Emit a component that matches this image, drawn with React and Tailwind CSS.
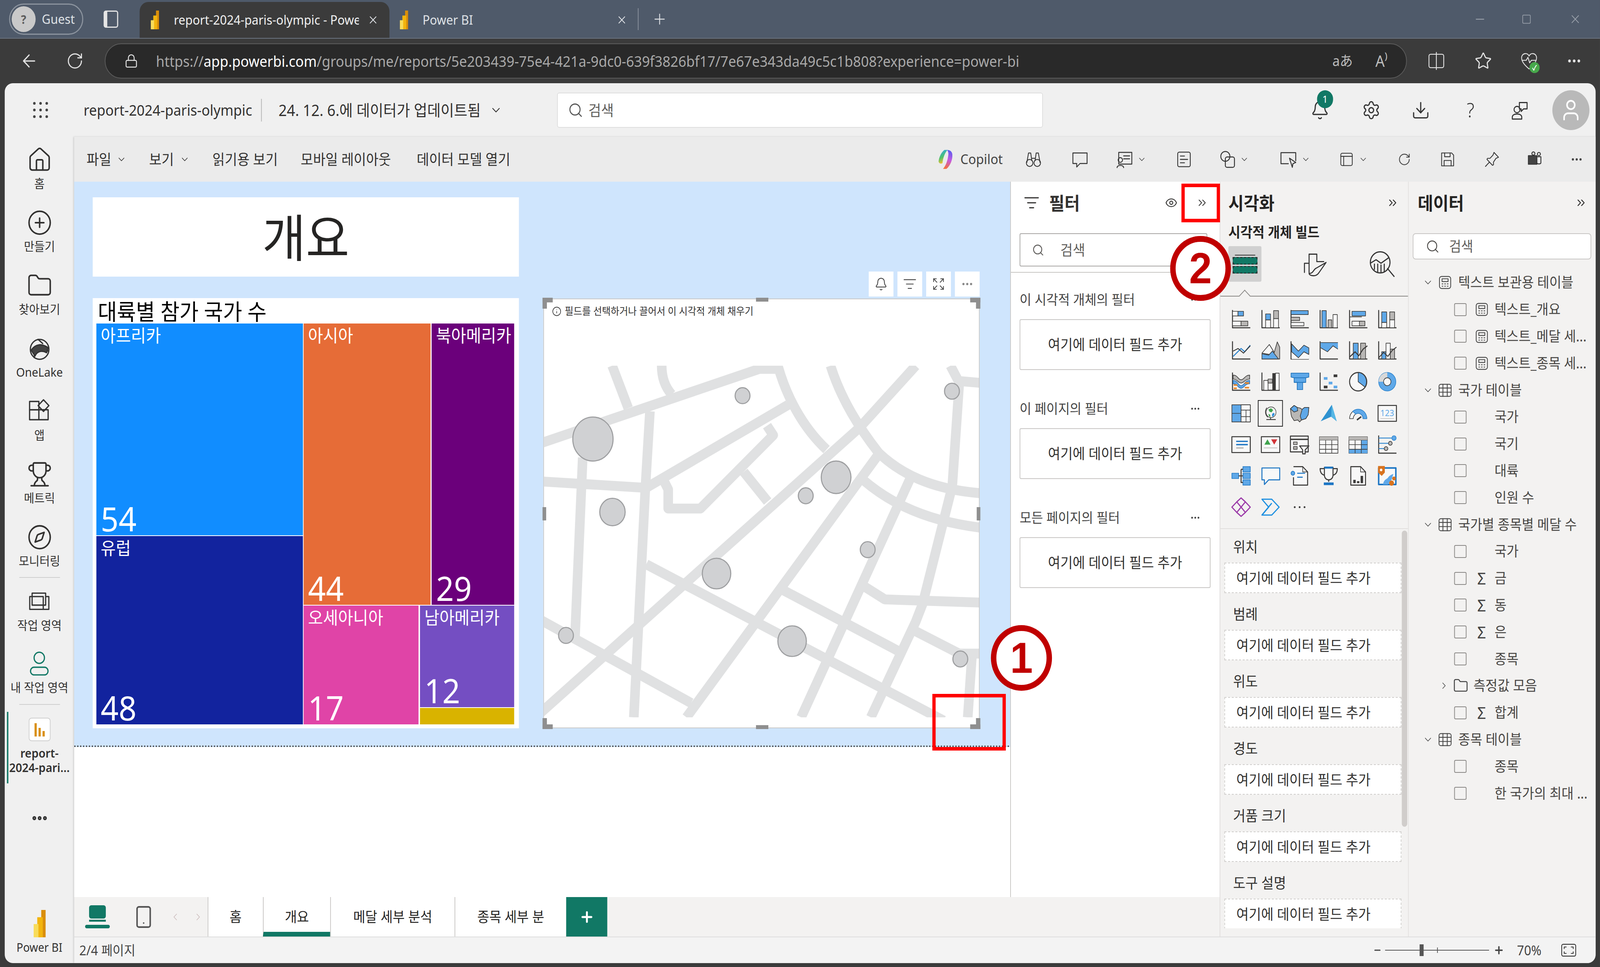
import {
  ArrowLeft, Bell, ChevronDown, ChevronRight, ChevronsRight, CirclePlus, Compass, Download, Ellipsis, Expand, Eye,
  Folder, House, Info, ListFilter, Lock, Minus, Plus, RotateCw, Search, Settings, Smartphone, Square, Star, Trophy, User, X,
} from "lucide-react";

const D = "#3b3a39";
const B = "#5fa8e8";
const G = "#b9b7b5";
const W = "#f8f8f8";

function PbiLogo({ className }) {
  return (
    <svg viewBox="0 0 32 64" className={className}>
      <rect x="20" width="11" height="64" fill="#d98e0b" />
      <rect x="10" y="17" width="14" height="47" fill="#f2b40e" />
      <rect x="1" y="33" width="12" height="31" fill="#f8dc5a" />
    </svg>
  );
}

function Ic({ children, className = "w-[64px] h-[64px]", vb = "0 0 32 32", stroke = "#333", sw = 1.4 }) {
  return (
    <svg viewBox={vb} fill="none" stroke={stroke} strokeWidth={sw} strokeLinecap="round" strokeLinejoin="round" className={className}>
      {children}
    </svg>
  );
}

const axis = <path d="M2 2v27h29" stroke={D} strokeWidth="1.6" fill="none" />;

// gallery of visual types, 6 per row
const GALLERY = [
  <>{axis}<rect x="2" y="4" width="9" height="7" fill={W} stroke={D} /><rect x="11" y="4" width="9" height="7" fill={B} stroke={D} /><rect x="2" y="19" width="14" height="7" fill={W} stroke={D} /><rect x="16" y="19" width="11" height="7" fill={G} stroke={D} /></>,
  <>{axis}<rect x="8" y="17" width="8" height="12" fill={W} stroke={D} /><rect x="8" y="8" width="8" height="9" fill={B} stroke={D} /><rect x="21" y="15" width="8" height="14" fill={W} stroke={D} /><rect x="21" y="3" width="8" height="12" fill={G} stroke={D} /></>,
  <>{axis}<rect x="2" y="3" width="28" height="6" fill={B} stroke={D} /><rect x="2" y="13" width="14" height="5" fill={G} stroke={D} /><rect x="2" y="21" width="21" height="5" fill={W} stroke={D} /></>,
  <>{axis}<rect x="5" y="3" width="7" height="26" fill={B} stroke={D} /><rect x="15" y="17" width="6" height="12" fill={G} stroke={D} /><rect x="23" y="9" width="7" height="20" fill={W} stroke={D} /></>,
  <>{axis}<rect x="6" y="4" width="22" height="7" fill={B} stroke={D} /><rect x="2" y="12" width="20" height="1" fill={D} /><rect x="6" y="19" width="16" height="7" fill={W} stroke={D} /><rect x="18" y="19" width="9" height="7" fill={G} stroke={D} /></>,
  <>{axis}<rect x="7" y="5" width="8" height="16" fill={B} stroke={D} /><rect x="7" y="21" width="8" height="8" fill={W} stroke={D} /><rect x="20" y="5" width="8" height="12" fill={G} stroke={D} /><rect x="20" y="17" width="8" height="12" fill={W} stroke={D} /></>,

  <>{axis}<path d="M3 25L16 13l6 5 9-10" stroke="#2f86cf" strokeWidth="1.6" /><path d="M3 17l8-4 9 7 11-11" stroke={D} strokeWidth="1.4" /></>,
  <><path d="M2 29L14 7l8 12 5-16 4 8v18z" fill={G} stroke={D} /><path d="M2 20L14 7l8 12-8 3z" fill={W} stroke={D} /><path d="M2 29v-8l11 2 6-6 10 12z" fill={B} stroke={D} /></>,
  <>{axis}<path d="M3 8l11 10 9-9 8 6v14H3z" fill={W} /><path d="M3 6l11 11 9-9 8 4v10l-8-4-9 9L3 18z" fill={B} stroke={D} /></>,
  <>{axis}<path d="M3 4h28v10l-8-5-9 9L3 12z" fill={B} /><path d="M3 4h28M3 12l11 6 9-9 8 5" stroke={D} fill="none" /></>,
  <>{axis}<rect x="8" y="5" width="8" height="24" fill={B} stroke={D} /><rect x="20" y="5" width="8" height="24" fill={G} stroke={D} /><path d="M2 26l9-8 6 6 7-10 7-5" stroke={D} strokeWidth="1.6" /></>,
  <>{axis}<rect x="7" y="18" width="7" height="11" fill={B} stroke={D} /><rect x="14" y="5" width="7" height="24" fill={W} stroke={D} /><rect x="21" y="14" width="7" height="15" fill={G} stroke={D} /><path d="M2 27l8-8 7 6 7-9 7-5" stroke={D} strokeWidth="1.4" /></>,

  <>{axis}<path d="M3 6c8 0 8 7 13 7s6-7 14-7v6c-8 0-9 6-14 6S10 12 3 12z" fill={G} stroke={D} /><path d="M3 14c8 0 8 8 13 8s6-8 14-8v5c-8 0-9 7-14 7S10 19 3 19z" fill={B} stroke="#2f6fb0" /><path d="M4 21h6M22 18h7M4 26h5M22 25h7" stroke="#e8872a" strokeWidth="2.4" /></>,
  <>{axis}<rect x="5" y="14" width="7" height="15" fill={W} stroke={D} /><rect x="12" y="12" width="7" height="6" fill={G} stroke={D} /><rect x="19" y="3" width="5" height="26" fill={D} /><rect x="24" y="3" width="6" height="26" fill={W} stroke={D} /></>,
  <><path d="M2 3h29v6l-5 1v7h-5v11H12V17H7v-7l-5-1z" fill={B} stroke="#1b6fb8" /><path d="M7 10h19M7 17h19" stroke="#1b6fb8" /></>,
  <>{axis}<rect x="8" y="9" width="6" height="4" fill={B} /><rect x="16" y="16" width="6" height="4" fill={B} /><rect x="24" y="5" width="6" height="4" fill={D} /><rect x="8" y="22" width="6" height="4" fill={D} /><rect x="24" y="22" width="6" height="4" fill={B} /></>,
  <><circle cx="16" cy="16" r="14" fill={W} stroke={D} strokeWidth="1.6" /><path d="M16 2a14 14 0 0 1 11 22L16 16z" fill={B} stroke={D} /></>,
  <><circle cx="16" cy="16" r="14" fill={B} stroke="#2f86cf" /><path d="M2 16A14 14 0 0 1 16 2v8a6 6 0 0 0-6 6z" fill="#d8d8d8" /><circle cx="16" cy="16" r="6" fill={W} stroke={D} /></>,

  <><rect x="1" y="3" width="15" height="26" fill={B} /><rect x="16" y="3" width="15" height="26" fill={W} stroke={D} /><path d="M1 16h15M16 11h15M24 11v18M16 21h15" stroke={D} /><rect x="1" y="3" width="30" height="26" stroke={D} /></>,
  <><circle cx="17" cy="14" r="9.5" fill="#f4f4f4" stroke={D} /><path d="M12 9l5-2 4 3-3 4-4-1z" fill="#3fa34d" /><path d="M19 17l3-2 2 2-3 5-2-1z" fill="#2e8fd8" /><path d="M12 17l3 1 1 4-3-1z" fill="#3fa34d" /><path d="M9 6a12 12 0 0 0 2 17" stroke={D} strokeWidth="1.4" /><path d="M8 27h18M16 23v4" stroke={D} strokeWidth="1.6" /></>,
  <><path d="M1 9l6-5 5 3 5 1 3 2 4-3 7 0-1 11-4 6-7 2-3 3-3-3-6 1-4-6-1-4-1-8z" fill={G} stroke={D} /><path d="M1 9l6-5 5 3 1 5-6 2zM20 10l4-3 7 0-1 11-4 6-7 2-2-6z" fill={B} stroke={D} /></>,
  <><path d="M3 28L21 3l8 25-9-7z" fill="#2f92d0" /><path d="M21 3l8 25-9-7z" fill="#55b7e5" /></>,
  <><path d="M2 24a14 14 0 0 1 28 0h-6a8 8 0 0 0-16 0z" fill={W} stroke={D} /><path d="M7 13a14 14 0 0 1 23 11h-6a8 8 0 0 0-12-7z" fill={B} stroke="#2f86cf" /><path d="M14 26l7-5" stroke={D} strokeWidth="2.2" /></>,
  <><rect x="1" y="4" width="30" height="24" fill={W} stroke={D} strokeWidth="1.6" /><path d="M5 24h22" stroke={G} /><text x="16" y="20" fontSize="13" fill={B} textAnchor="middle">123</text></>,

  <><rect x="1" y="4" width="30" height="24" fill={W} stroke={D} strokeWidth="1.6" /><path d="M8 11h19M8 16h19" stroke="#1d76c4" strokeWidth="2" /><path d="M8 21h12" stroke={G} strokeWidth="2" /></>,
  <><rect x="1" y="4" width="30" height="24" fill={W} stroke={D} strokeWidth="1.6" /><path d="M6 16l5-8 5 8z" fill="#3fa34d" /><path d="M17 8h10l-5 8z" fill="#d13438" /><path d="M5 21h22" stroke={G} /></>,
  <><rect x="1" y="3" width="29" height="24" fill={W} stroke={D} strokeWidth="1.6" /><path d="M1 8h29" stroke={D} strokeWidth="2" /><rect x="6" y="12" width="6" height="4" fill={G} stroke={D} /><rect x="6" y="19" width="6" height="4" fill={G} stroke={D} /><path d="M16 18h15l-6 6v6h-4v-6z" fill={W} stroke={D} strokeWidth="1.6" /></>,
  <><rect x="1" y="4" width="30" height="25" fill={W} stroke={D} /><path d="M1 9h30M1 16h30M1 23h30M11 9v20M21 9v20" stroke={D} /><rect x="1" y="4" width="30" height="5" fill={G} /></>,
  <><rect x="1" y="4" width="30" height="25" fill={W} stroke={D} /><rect x="21" y="9" width="10" height="20" fill={B} /><rect x="1" y="23" width="30" height="6" fill={B} /><path d="M1 9h30M1 16h30M1 23h30M11 9v20M21 9v20" stroke={D} /><rect x="1" y="4" width="30" height="5" fill={G} /></>,
  <>{axis}<path d="M2 6h22M2 14h16M2 22h10" stroke="#2f86cf" strokeWidth="1.4" /><circle cx="27" cy="6" r="3.5" fill={B} stroke="#2f86cf" /><circle cx="21" cy="14" r="3" fill={G} stroke={D} /><circle cx="14" cy="22" r="3" fill={G} stroke={D} /></>,

  <><rect x="1" y="12" width="11" height="8" fill={B} stroke="#1d76c4" /><rect x="19" y="2" width="12" height="8" fill={B} stroke="#1d76c4" /><rect x="19" y="12" width="12" height="8" fill={B} stroke="#1d76c4" /><rect x="19" y="22" width="12" height="8" fill={B} stroke="#1d76c4" /><path d="M12 16h7M16 6v20h3M16 6h3" stroke={D} strokeWidth="1.6" /></>,
  <path d="M2 4h29v18H13l-7 7v-7H2z" fill={W} stroke="#1d76c4" strokeWidth="1.6" />,
  <><path d="M6 2h15l8 8v20H6V18" fill={W} stroke={D} strokeWidth="1.6" /><path d="M21 2v8h8" stroke={D} /><circle cx="5" cy="12" r="3" fill={B} stroke="#1d76c4" /><path d="M12 12h13M12 18h9" stroke="#1d76c4" strokeWidth="1.6" /></>,
  <><path d="M9 3h14v12c0 4-3 7-7 7s-7-3-7-7z" fill={W} stroke={D} strokeWidth="1.6" /><path d="M9 5H2c0 6 3 9 7 10M23 5h7c0 6-3 9-7 10" stroke={D} strokeWidth="1.6" /><rect x="9" y="2" width="14" height="3" fill="#1d76c4" /><path d="M16 22v3" stroke={D} strokeWidth="1.6" /><rect x="8" y="26" width="16" height="4" fill="#1d76c4" /></>,
  <><path d="M4 2h16l8 8v20H4z" fill={W} stroke={D} strokeWidth="1.6" /><path d="M20 2v8h8" stroke={D} /><rect x="8" y="22" width="4" height="5" fill={D} /><rect x="14" y="24" width="4" height="3" fill={D} /><rect x="20" y="16" width="4" height="11" fill={D} /></>,
  <><path d="M2 4h28v25H2z" fill={W} stroke="#1d76c4" strokeWidth="2.4" /><path d="M9 29c2-8 5-7 8-10 3-4 6-5 9-6l-3 9-6 7z" fill={B} /><path d="M1 1h11v10l-5 5-6-5z" fill="#d8731f" /><circle cx="6" cy="7" r="2" fill="#fff" /><circle cx="27" cy="20" r="3" fill="#d8731f" /><circle cx="23" cy="27" r="4" fill="#d8731f" /></>,

  <path d="M1 16L9 8l7 8 7-8 8 8-8 8-7-8-7 8zM9 8l7-6 7 6M9 24l7 6 7-6" fill="none" stroke="#9b3aa8" strokeWidth="1.8" />,
  <><path d="M2 4h16l12 12-12 12H2l11-12z" fill="none" stroke="#1d8fe0" strokeWidth="1.8" /><path d="M2 28L18 10" stroke="#1d8fe0" strokeWidth="1.8" /></>,
  <><circle cx="8" cy="16" r="1.5" fill={D} /><circle cx="16" cy="16" r="1.5" fill={D} /><circle cx="24" cy="16" r="1.5" fill={D} /></>,
];

const NAV = [
  [<House key="i" size={70} strokeWidth={1.4} />, "홈"],
  [<CirclePlus key="i" size={70} strokeWidth={1.4} />, "만들기"],
  [<Folder key="i" size={70} strokeWidth={1.4} />, "찾아보기"],
  [
    <Ic key="i" className="w-[68px] h-[68px]" sw={1.6}>
      <circle cx="16" cy="17" r="12" />
      <path d="M9 27c0-8 6-12 18-8M14 5l6 5" />
      <path d="M5 18c6-8 14-8 22-3l-2 6c-6-3-12-2-15 4z" fill="#444" />
    </Ic>,
    "OneLake",
  ],
  [
    <Ic key="i" className="w-[68px] h-[68px]" sw={1.6}>
      <rect x="3" y="14" width="12" height="12" /><rect x="15" y="14" width="12" height="12" /><rect x="3" y="4" width="12" height="10" /><path d="M21 2l7 7-7 7-7-7z" />
    </Ic>,
    "앱",
  ],
  [<Trophy key="i" size={70} strokeWidth={1.4} />, "메트릭"],
  [<Compass key="i" size={70} strokeWidth={1.4} />, "모니터링"],
];

const FIELD_WELLS = ["위치", "범례", "위도", "경도", "거품 크기", "도구 설명"];

const DATA_ROWS = [
  { kind: "table", icon: "calc", label: "텍스트 보관용 테이블" },
  { icon: "calc", label: "텍스트_개요" },
  { icon: "calc", label: "텍스트_메달 세..." },
  { icon: "calc", label: "텍스트_종목 세..." },
  { kind: "table", icon: "grid", label: "국가 테이블" },
  { label: "국가" },
  { label: "국기" },
  { label: "대륙" },
  { label: "인원 수" },
  { kind: "table", icon: "grid", label: "국가별 종목별 메달 수" },
  { label: "국가" },
  { icon: "sum", label: "금" },
  { icon: "sum", label: "동" },
  { icon: "sum", label: "은" },
  { label: "종목" },
  { kind: "folder", label: "측정값 모음" },
  { icon: "sum", label: "합계" },
  { kind: "table", icon: "grid", label: "종목 테이블" },
  { label: "종목" },
  { label: "한 국가의 최대 ..." },
];

function RowIcon({ icon }) {
  if (icon === "sum") return <span className="text-[42px] leading-none text-[#444]">Σ</span>;
  if (icon === "grid") {
    return (
      <Ic className="w-[38px] h-[38px]" stroke="#444" sw={1.8}>
        <rect x="2" y="3" width="28" height="26" rx="4" />
        <path d="M2 11h28M2 20h28M11 3v26M21 3v26" />
      </Ic>
    );
  }
  if (icon === "calc") {
    return (
      <Ic className="w-[38px] h-[38px]" stroke="#444" sw={1.8}>
        <rect x="3" y="3" width="26" height="26" rx="5" />
        <rect x="9" y="8" width="14" height="6" />
        <path d="M9 19h2M15 19h2M21 19h2M9 24h2M15 24h2M21 24h2" />
      </Ic>
    );
  }
  return null;
}

function DataRow({ row }) {
  if (row.kind === "table") {
    return (
      <div className="h-[68.8px] flex items-center pl-[38px]">
        <ChevronDown size={30} strokeWidth={1.4} color="#444" />
        <div className="w-[64px] flex justify-center"><RowIcon icon={row.icon} /></div>
        <span className="ml-[4px] whitespace-nowrap">{row.label}</span>
      </div>
    );
  }
  if (row.kind === "folder") {
    return (
      <div className="h-[68.8px] flex items-center pl-[83px]">
        <ChevronRight size={28} strokeWidth={1.4} color="#444" />
        <Folder size={42} strokeWidth={1.5} color="#444" className="ml-[11px]" />
        <span className="ml-[14px] whitespace-nowrap">{row.label}</span>
      </div>
    );
  }
  return (
    <div className="h-[68.8px] flex items-center pl-[125px]">
      <div className="w-[34px] h-[33px] rounded-[4px] border-2 border-[#8a8886] bg-[#f3f2f1]" />
      <div className="w-[77px] flex justify-center pl-[6px]"><RowIcon icon={row.icon} /></div>
      <span className="whitespace-nowrap">{row.label}</span>
    </div>
  );
}

function Tile({ label, value, bg, className }) {
  return (
    <div className={`${bg} ${className} flex flex-col justify-between text-white pl-[12px]`}>
      <span className="text-[45px] leading-[62px] whitespace-nowrap">{label}</span>
      <span className="text-[86px] leading-none">{value}</span>
    </div>
  );
}

function MapSketch() {
  const roads = [
    "M30 555L735 322H800",
    "M260 312L312 445",
    "M420 312C420 350 432 380 452 402",
    "M382 455L367 700L345 1125L330 1415",
    "M165 600L140 1165",
    "M30 675L370 695L828 435",
    "M760 500L780 530L545 760H441V700L428 675",
    "M685 645L762 738",
    "M1240 312L1060 505L30 1400",
    "M795 312C820 400 870 500 952 575",
    "M965 312C1000 420 1060 510 1120 585C1190 650 1290 700 1450 712",
    "M1120 590L500 1415",
    "M1070 670C1130 720 1240 795 1450 820",
    "M1225 660L870 1415",
    "M1380 375L1358 690L1262 1060L1240 1115L1095 1415",
    "M1352 312L1378 360L1450 366",
    "M370 935L1330 1425",
    "M810 1015L1180 1205",
    "M1075 1005L1140 1045L1450 1055",
    "M1240 1145L1380 1215H1450",
    "M1422 1215L1408 1415",
    "M30 1110L515 1370",
  ];
  const spots = [
    [198, 542, 65, 69], [681, 406, 24, 25], [1357, 392, 24, 25], [983, 662, 48, 51], [885, 720, 24, 25], [261, 771, 41, 43],
    [1085, 889, 24, 25], [597, 964, 46, 48], [841, 1176, 46, 48], [111, 1158, 24, 25], [1384, 1232, 24, 25],
  ];
  return (
    <svg viewBox="40 312 1404 1103" preserveAspectRatio="none" className="w-full h-[900px]">
      {roads.map((d) => (
        <path key={d} d={d} fill="none" stroke="#e0e1e2" strokeWidth="31" strokeLinejoin="round" />
      ))}
      {spots.map(([cx, cy, rx, ry]) => (
        <ellipse key={cx} cx={cx} cy={cy} rx={rx} ry={ry} fill="#d0d1d3" stroke="#9e9fa1" strokeWidth="3.5" />
      ))}
    </svg>
  );
}

function Corner({ className }) {
  return <div className={`absolute w-[28px] h-[28px] border-[#8f8f8f] ${className}`} />;
}

export default function App() {
  return (
    // The browser window measures 4096px wide, not the 4400px asked for (window.innerWidth),
    // so the 4400px page is squeezed by 4096/4400 to keep the right-hand panes in frame.
    <div className="w-[4096px] h-[2475px] overflow-hidden">
      <div className="relative origin-top-left scale-x-[0.9309] w-[4400px] h-[2475px] overflow-hidden flex flex-col bg-[#3b3b3b] text-[#252423] font-['Noto_Sans','Noto_Sans_CJK_KR',sans-serif]">
        {/* browser tabs */}
        <div className="h-[97px] shrink-0 bg-[#4f5a6a] flex items-end text-[33px] text-[#dfe2e6]">
          <div className="self-start mt-[9px] ml-[25px] w-[204px] h-[80px] rounded-full border-[3px] border-[#8b939e] flex items-center pl-[4px]">
            <div className="w-[66px] h-[66px] rounded-full bg-[#c9c9c9] flex items-center justify-center text-[#5b5b5b] text-[30px] font-bold">?</div>
            <span className="ml-[17px]">Guest</span>
          </div>
          <div className="self-center ml-[56px] w-[40px] h-[44px] rounded-[6px] border-[3px] border-[#e6e6e6] border-l-[10px]" />
          <div className="ml-[59px] w-[687px] h-[92px] rounded-t-[24px] bg-[#3b3b3b] flex items-center">
            <PbiLogo className="w-[28px] h-[48px] ml-[28px] shrink-0" />
            <span className="ml-[38px] w-[509px] overflow-hidden whitespace-nowrap text-[#f0f0f0]">report-2024-paris-olympic - Powe</span>
            <X size={32} strokeWidth={1.6} className="ml-[23px] shrink-0" />
          </div>
          <div className="w-[683px] h-[92px] flex items-center">
            <PbiLogo className="w-[28px] h-[48px] ml-[26px] shrink-0" />
            <span className="ml-[37px]">Power BI</span>
            <X size={32} strokeWidth={1.6} className="ml-[393px]" />
          </div>
          <div className="self-center w-[2px] h-[56px] bg-[#8b939e]" />
          <Plus size={44} strokeWidth={1.3} className="self-center ml-[36px]" />
          <div className="self-center ml-auto flex items-center text-[#9aa1ab]">
            <Minus size={36} strokeWidth={1.5} className="mr-[96px]" />
            <Square size={28} strokeWidth={1.5} className="mr-[102px]" />
            <X size={36} strokeWidth={1.3} className="mr-[50px]" />
          </div>
        </div>

        {/* address bar */}
        <div className="h-[116px] shrink-0 flex items-center text-[#e3e3e3] border-t-2 border-[#6a7380]">
          <ArrowLeft size={52} strokeWidth={1.5} className="ml-[54px]" />
          <RotateCw size={48} strokeWidth={1.5} className="ml-[76px]" />
          <div className="ml-[58px] w-[3581px] h-[90px] rounded-full bg-[#292929] border-2 border-[#5c5c5c] flex items-center text-[38px] text-[#a8a8a8]">
            <Lock size={38} strokeWidth={1.6} color="#e3e3e3" className="ml-[52px]" />
            <span className="ml-[49px] whitespace-nowrap">
              https://<span className="text-white">app.powerbi.com</span>/groups/me/reports/5e203439-75e4-421a-9dc0-639f3826bf17/7e67e343da49c5c1b808?experience=power-bi
            </span>
            <span className="ml-auto text-[36px] text-[#bdbdbd]">aあ</span>
            <span className="ml-[62px] mr-[50px] text-[40px] text-[#bdbdbd]">A⁾</span>
          </div>
          <Ic className="w-[50px] h-[50px] ml-[56px]" stroke="#e3e3e3" sw={1.5}><rect x="3" y="5" width="26" height="22" rx="3" /><path d="M16 2v28" /></Ic>
          <Star size={48} strokeWidth={1.5} className="ml-[80px]" />
          <div className="relative ml-[77px] w-[50px] h-[50px]">
            <Ic className="w-[50px] h-[50px]" stroke="#e3e3e3" sw={1.5}><path d="M16 29C4 20 2 14 3 9c2-6 10-7 13-1 3-6 11-5 13 1 1 5-1 11-13 20zM4 15h7l3-5 3 9 3-4h8" /></Ic>
            <div className="absolute right-[-4px] bottom-[-6px] w-[28px] h-[28px] rounded-full bg-[#47a84b] flex items-center justify-center text-white text-[18px] font-bold">✓</div>
          </div>
          <Ellipsis size={44} strokeWidth={2} className="ml-[77px]" />
        </div>

        {/* app */}
        <div className="flex-1 min-h-0 ml-[13px] mr-[12px] mb-[10px] rounded-[22px] overflow-hidden bg-[#f0f0f0] flex flex-col">
          <div className="h-[137px] shrink-0 flex items-center text-[38px] text-[#323130]">
            <div className="w-[1519px] shrink-0 flex items-center">
              <div className="ml-[78px] grid grid-cols-3 gap-[10px] shrink-0">
                {[...Array(9)].map((_, i) => (
                  <div key={i} className="w-[7px] h-[7px] rounded-full bg-[#444]" />
                ))}
              </div>
              <span className="ml-[98px] w-[488px] whitespace-nowrap">report-2024-paris-olympic</span>
              <div className="w-[2px] h-[58px] bg-[#b5b5b5]" />
              <span className="ml-[46px] whitespace-nowrap text-[40px]">24. 12. 6.에 데이터가 업데이트됨</span>
              <ChevronDown size={36} strokeWidth={1.5} className="ml-[24px]" />
            </div>
            <div className="w-[1336px] h-[90px] rounded-[6px] bg-white border-2 border-[#dedede] flex items-center">
              <Search size={42} strokeWidth={1.6} color="#555" className="ml-[28px]" />
              <span className="ml-[14px] text-[#605e5c]">검색</span>
            </div>
            <div className="ml-auto flex items-center mr-[17px]">
              <div className="relative w-[52px] flex justify-center">
                <Bell size={52} strokeWidth={1.5} color="#333" />
                <div className="absolute left-[18px] top-[-25px] w-[44px] h-[46px] rounded-full bg-[#117865] text-white text-[26px] flex items-center justify-center">1</div>
              </div>
              <Settings size={52} strokeWidth={1.5} color="#333" className="ml-[89px]" />
              <Download size={52} strokeWidth={1.5} color="#333" className="ml-[84px]" />
              <span className="ml-[85px] w-[52px] text-center text-[50px] font-light text-[#333]">?</span>
              <Ic className="w-[52px] h-[52px] ml-[84px]" stroke="#333" sw={1.7}>
                <circle cx="11" cy="15" r="5" /><path d="M3 30v-3c0-3 3-5 8-5s8 2 8 5v3z" /><path d="M15 4h13v10h-6l-4 4v-4h-3z" />
              </Ic>
              <div className="ml-[63px] w-[102px] h-[102px] rounded-full bg-[#b9b9b9] flex items-center justify-center">
                <User size={64} strokeWidth={1.6} color="#fff" />
              </div>
            </div>
          </div>

          <div className="flex-1 flex min-h-0">
            {/* left nav */}
            <nav className="w-[191px] shrink-0 flex flex-col items-center relative text-[31px] text-[#323130]">
              {NAV.map(([icon, label]) => (
                <div key={label} className="h-[161px] shrink-0 flex flex-col items-center justify-center gap-[4px]">
                  <div className="h-[72px] flex items-center">{icon}</div>
                  <span className="leading-[40px] whitespace-nowrap">{label}</span>
                </div>
              ))}
              <div className="w-[112px] h-[2px] mb-[3px] bg-[#cfcfcf]" />
              <div className="h-[159px] shrink-0 flex flex-col items-center pt-[22px] gap-[4px]">
                <div className="h-[72px] flex items-center">
                  <Ic className="w-[70px] h-[70px]" sw={1.5}><path d="M7 6h17v14H7z" /><path d="M4 10h17v15H4zM25 10h3v15H10" /></Ic>
                </div>
                <span className="leading-[40px] whitespace-nowrap">작업 영역</span>
              </div>
              <div className="h-[161px] shrink-0 flex flex-col items-center pt-[22px] gap-[4px]">
                <div className="h-[72px] flex items-center">
                  <Ic className="w-[70px] h-[70px]" stroke="#117865" sw={1.5}><circle cx="16" cy="9" r="6.5" /><rect x="5" y="20" width="22" height="9" rx="4.5" /></Ic>
                </div>
                <span className="leading-[40px] whitespace-nowrap">내 작업 영역</span>
              </div>
              <div className="w-[112px] h-[2px] bg-[#cfcfcf]" />
              <div className="mt-[33px] w-[60px] h-[60px] rounded-[8px] bg-white border-2 border-[#cfcfcf] flex items-end justify-center gap-[5px] pb-[10px]">
                <div className="w-[6px] h-[34px] bg-[#d98e0b]" />
                <div className="w-[6px] h-[22px] bg-[#d98e0b]" />
                <div className="w-[6px] h-[14px] bg-[#d98e0b]" />
              </div>
              <div className="mt-[12px] text-center font-semibold leading-[37px] text-[31px]">report-<br />2024-pari...</div>
              <Ellipsis size={50} strokeWidth={3} color="#333" className="mt-[86px]" />
              <div className="mt-auto flex flex-col items-center pb-[20px]">
                <PbiLogo className="w-[44px] h-[70px]" />
                <span className="mt-[6px] text-[30px] leading-[40px]">Power BI</span>
              </div>
              <div className="absolute left-[6px] top-[1472px] w-[4px] h-[183px] bg-[#117865]" />
            </nav>

            <div className="flex-1 flex flex-col min-w-0 shadow-[-2px_0_4px_rgba(0,0,0,0.15)]">
              {/* ribbon */}
              <div className="h-[115px] shrink-0 bg-[#ebebeb] flex items-center text-[37px] text-[#323130]">
                <span className="ml-[34px]">파일</span>
                <ChevronDown size={28} strokeWidth={1.5} className="ml-[14px]" />
                <span className="ml-[62px]">보기</span>
                <ChevronDown size={28} strokeWidth={1.5} className="ml-[16px]" />
                <span className="ml-[62px]">읽기용 보기</span>
                <span className="ml-[63px]">모바일 레이아웃</span>
                <span className="ml-[71px]">데이터 모델 열기</span>
                <div className="ml-auto flex items-center mr-[34px] text-[#444]">
                  <svg viewBox="0 0 32 40" className="w-[46px] h-[54px] mr-[18px]">
                    <defs>
                      <linearGradient id="cpa" x1="0" y1="0" x2="0.3" y2="1">
                        <stop offset="0" stopColor="#2aa5f0" /><stop offset="0.6" stopColor="#4fc26a" /><stop offset="1" stopColor="#f2c230" />
                      </linearGradient>
                      <linearGradient id="cpb" x1="0.6" y1="0" x2="0.4" y2="1">
                        <stop offset="0" stopColor="#5a5cf0" /><stop offset="0.5" stopColor="#c45ae0" /><stop offset="1" stopColor="#f5703a" />
                      </linearGradient>
                    </defs>
                    <path d="M14 2h6c-5 6-9 14-10 25-3 2-7 1-8-3C3 15 8 6 14 2z" fill="url(#cpa)" />
                    <path d="M19 2c5 0 10 2 11 8 1 10-4 22-12 28h-7c6-6 10-17 11-28 0-4-1-6-3-8z" fill="url(#cpb)" />
                  </svg>
                  <span className="w-[113px] text-[35px]">Copilot</span>
                  <Ic className="w-[48px] h-[54px] ml-[64px]" sw={1.5}><circle cx="9" cy="22" r="6" /><circle cx="23" cy="22" r="6" /><path d="M4 21L7 5h4l2 13M28 21L25 5h-4l-2 13M13 14h6" /></Ic>
                  <Ic className="w-[48px] h-[50px] ml-[80px]" sw={1.6}><path d="M3 5h26v18H16l-6 6v-6H3z" /></Ic>
                  <Ic className="w-[48px] h-[50px] ml-[75px]" sw={1.6}><rect x="5" y="4" width="24" height="20" /><path d="M14 10h11M14 15h11" /><circle cx="8" cy="17" r="4" /><path d="M2 30c0-5 12-5 12 0" /></Ic>
                  <ChevronDown size={26} strokeWidth={1.5} className="ml-[10px]" />
                  <Ic className="w-[46px] h-[50px] ml-[80px]" sw={1.6}><rect x="4" y="3" width="24" height="26" rx="3" /><path d="M9 10h8M9 16h14M9 22h8" /></Ic>
                  <Ic className="w-[50px] h-[54px] ml-[72px]" sw={1.6}><circle cx="12" cy="11" r="8" /><rect x="12" y="12" width="16" height="17" rx="3" /></Ic>
                  <ChevronDown size={26} strokeWidth={1.5} className="ml-[8px]" />
                  <Ic className="w-[50px] h-[54px] ml-[83px]" sw={1.6}><path d="M29 18V5H3v18h13" /><path d="M18 14l11 7-5 2-1 6z" /></Ic>
                  <ChevronDown size={26} strokeWidth={1.5} className="ml-[10px]" />
                  <Ic className="w-[42px] h-[46px] ml-[78px]" sw={1.6}><rect x="4" y="4" width="24" height="24" rx="3" /><path d="M4 10h24M10 10v18" /></Ic>
                  <ChevronDown size={26} strokeWidth={1.5} className="ml-[12px]" />
                  <RotateCw size={36} strokeWidth={1.5} className="ml-[82px]" />
                  <Ic className="w-[44px] h-[46px] ml-[79px]" sw={1.6}><path d="M4 4h20l4 4v20H4z" /><path d="M10 4v7h11V4M9 28V18h14v10" /></Ic>
                  <Ic className="w-[44px] h-[46px] ml-[78px]" sw={1.6}><path d="M20 3l9 9-5 2-5 7v5l-2 1-11-11 1-2h5l6-6z" /><path d="M11 21l-8 8" /></Ic>
                  <Ic className="w-[44px] h-[46px] ml-[74px]" stroke="#333" sw={1.8}><rect x="3" y="9" width="17" height="16" fill="#444" /><path d="M20 11h8v11c0 3-6 3-8 1" /><circle cx="24" cy="6" r="3" /><circle cx="13" cy="5" r="3" /></Ic>
                  <Ellipsis size={36} strokeWidth={2} className="ml-[75px]" />
                </div>
              </div>

              <div className="flex-1 flex min-h-0">
                <div className="w-[3150px] shrink-0 flex flex-col min-h-0">
                  <div className="flex-1 flex min-h-0">
                    {/* report canvas */}
                    <div className="w-[2574px] flex flex-col bg-white relative">
                      <div className="h-[1447px] shrink-0 bg-[#cfe5fd] flex pl-[51px] pt-[40px] gap-[67px] border-b-4 border-dotted border-[#444]">
                        <div className="w-[1172px]">
                          <div className="h-[203px] bg-white flex items-center justify-center text-[130px] text-[#252423]">개요</div>
                          <div className="mt-[55px] h-[1101px] bg-white px-[10px]">
                            <div className="h-[65px] pl-[4px] text-[57px] leading-[68px] text-black whitespace-nowrap">대륙별 참가 국가 수</div>
                            <div className="flex gap-[2px]">
                              <div className="w-[568px] flex flex-col gap-[2px]">
                                <Tile label="아프리카" value="54" bg="bg-[#118dff]" className="h-[542px]" />
                                <Tile label="유럽" value="48" bg="bg-[#12239e]" className="h-[482px]" />
                              </div>
                              <div className="w-[579px] flex flex-col gap-[2px]">
                                <div className="h-[720px] flex gap-[3px]">
                                  <Tile label="아시아" value="44" bg="bg-[#e66c37]" className="w-[349px]" />
                                  <Tile label="북아메리카" value="29" bg="bg-[#6b007b]" className="w-[227px]" />
                                </div>
                                <div className="h-[304px] flex gap-[4px]">
                                  <Tile label="오세아니아" value="17" bg="bg-[#e044a7]" className="w-[316px]" />
                                  <div className="w-[259px] flex flex-col gap-[2px]">
                                    <Tile label="남아메리카" value="12" bg="bg-[#744ec2]" className="h-[260px]" />
                                    <div className="h-[42px] bg-[#d9b300]" />
                                  </div>
                                </div>
                              </div>
                            </div>
                          </div>
                        </div>
                        <div className="w-[1200px] pt-[190px]">
                          <div className="h-[64px] mb-[5px] flex justify-end gap-[11px] text-[#444]">
                            <div className="w-[68px] h-[64px] bg-white flex items-center justify-center"><Bell size={36} strokeWidth={1.5} /></div>
                            <div className="w-[68px] h-[64px] bg-white flex items-center justify-center"><ListFilter size={38} strokeWidth={1.4} /></div>
                            <div className="w-[68px] h-[64px] bg-white flex items-center justify-center"><Expand size={36} strokeWidth={1.4} /></div>
                            <div className="w-[68px] h-[64px] bg-white flex items-center justify-center"><Ellipsis size={36} strokeWidth={2} color="#888" /></div>
                          </div>
                          <div className="relative h-[1100px] bg-white border-2 border-[#c8c8c8]">
                            <div className="h-[170px] pl-[22px] pt-[12px] flex items-start text-[26px] leading-[36px] text-[#333]">
                              <Info size={26} strokeWidth={1.5} className="mt-[6px]" />
                              <span className="ml-[9px] whitespace-nowrap">필드를 선택하거나 끌어서 이 시각적 개체 채우기</span>
                            </div>
                            <MapSketch />
                            <Corner className="left-[-4px] top-[-4px] border-l-[12px] border-t-[12px]" />
                            <Corner className="right-[-4px] top-[-4px] border-r-[12px] border-t-[12px]" />
                            <Corner className="left-[-4px] bottom-[-4px] border-l-[12px] border-b-[12px]" />
                            <Corner className="right-[-4px] bottom-[-4px] border-r-[12px] border-b-[12px]" />
                            <div className="absolute left-[583px] top-[-4px] w-[34px] h-[10px] bg-[#8f8f8f]" />
                            <div className="absolute left-[583px] bottom-[-4px] w-[34px] h-[10px] bg-[#8f8f8f]" />
                            <div className="absolute left-[-4px] top-[532px] w-[10px] h-[34px] bg-[#8f8f8f]" />
                            <div className="absolute right-[-4px] top-[532px] w-[10px] h-[34px] bg-[#8f8f8f]" />
                          </div>
                        </div>
                      </div>
                    </div>

                    {/* filter pane */}
                    <div className="flex-1 bg-white border-l-2 border-[#c8c6c4] text-[37px] text-[#323130]">
                      <div className="h-[108px] flex items-center pl-[35px]">
                        <ListFilter size={44} strokeWidth={1.6} />
                        <span className="ml-[26px] text-[46px] font-semibold">필터</span>
                        <Eye size={34} strokeWidth={1.7} className="ml-[234px]" />
                        <ChevronsRight size={34} strokeWidth={1.5} className="ml-[51px]" />
                      </div>
                      <div className="ml-[24px] mt-[24px] w-[516px] h-[85px] rounded-[4px] border-2 border-[#a8a6a4] flex items-center text-[#605e5c]">
                        <Search size={34} strokeWidth={1.7} className="ml-[32px]" />
                        <span className="ml-[44px]">검색</span>
                      </div>
                      <div className="mt-[14px] h-[2px] bg-[#c8c6c4]" />
                      {["이 시각적 개체의 필터", "이 페이지의 필터", "모든 페이지의 필터"].map((title) => (
                        <div key={title} className="h-[279px] pl-[24px] pt-[44px]">
                          <div className="flex items-center justify-between w-[498px] h-[50px] text-[35px] text-[#444]">
                            <span>{title}</span>
                            <Ellipsis size={30} strokeWidth={2} />
                          </div>
                          <div className="mt-[25px] w-[525px] h-[130px] rounded-[4px] border-2 border-[#c8c6c4] flex items-center justify-center">
                            여기에 데이터 필드 추가
                          </div>
                        </div>
                      ))}
                    </div>
                  </div>

                  {/* page tabs */}
                  <div className="h-[101px] shrink-0 bg-[#f3f2f1] flex text-[36px] text-[#252423]">
                    <div className="w-[367px] flex items-center">
                      <div className="ml-[34px] w-[60px] flex flex-col items-center">
                        <div className="w-[46px] h-[34px] rounded-[6px] bg-[#117865]" />
                        <div className="mt-[3px] w-[46px] h-[5px] bg-[#117865]" />
                        <div className="mt-[8px] w-[68px] h-[9px] rounded-full bg-[#117865]" />
                      </div>
                      <Smartphone size={62} strokeWidth={1.6} color="#555" className="ml-[66px]" />
                      <ChevronRight size={30} strokeWidth={1.2} color="#c8b8b8" className="ml-[41px] rotate-180" />
                      <ChevronRight size={30} strokeWidth={1.2} color="#c8b8b8" className="ml-[33px]" />
                    </div>
                    <div className="w-[152px] bg-white border-l-2 border-[#c8c6c4] flex items-center justify-center">홈</div>
                    <div className="w-[185px] bg-white border-l-2 border-[#c8c6c4] flex items-center justify-center border-b-[12px] border-b-[#117865] pt-[12px]">개요</div>
                    <div className="w-[342px] bg-white border-l-2 border-[#c8c6c4] flex items-center justify-center">메달 세부 분석</div>
                    <div className="w-[307px] bg-white border-l-2 border-[#c8c6c4] flex items-center justify-center">종목 세부 분</div>
                    <div className="w-[113px] bg-[#117865] flex items-center justify-center"><Plus size={42} strokeWidth={3} color="#fff" /></div>
                  </div>
                </div>

                {/* visualizations pane */}
                <div className="w-[518px] shrink-0 bg-[#f3f2f1] border-l-2 border-[#e1dfdd] relative">
                  <div className="h-[108px] flex items-center pl-[22px]">
                    <span className="text-[46px] font-semibold">시각화</span>
                    <ChevronsRight size={34} strokeWidth={1.6} className="ml-[308px]" />
                  </div>
                  <div className="pl-[22px] text-[36px] font-semibold leading-[44px]">시각적 개체 빌드</div>
                  <div className="mt-[13px] h-[91px] flex items-center pl-[22px]">
                    <div className="w-[91px] h-[91px] rounded-[4px] bg-[#d0d0d0] flex flex-col items-center justify-center gap-[4px]">
                      <div className="w-[56px] h-[2px] bg-[#333]" />
                      <div className="w-[68px] h-[19px] bg-[#117865] border-2 border-dashed border-[#222]" />
                      <div className="w-[68px] h-[19px] bg-[#117865] border-2 border-dashed border-[#222]" />
                    </div>
                    <Ic className="w-[68px] h-[70px] ml-[114px]" sw={1.3}><path d="M2 26V15h6v11M8 22V4h10v9h9M14 30c-3 0-6-1-6-3 5 1 6-5 9-6l13-7-9 12c-2 3-4 4-7 4z" /></Ic>
                    <Ic className="w-[72px] h-[72px] ml-[113px]" sw={1.3}><circle cx="14" cy="14" r="12" /><path d="M2 15l7-4 6 4 9-6M7 22v-6M11 25v-9M15 25v-8M19 24v-8M23 21l8 9" /></Ic>
                  </div>
                  <div className="relative mt-[36px] h-[2px] bg-[#8a8886]">
                    <div className="absolute left-[56px] top-[-11px] w-[22px] h-[22px] rotate-45 border-l-2 border-t-2 border-[#8a8886] bg-[#f3f2f1]" />
                  </div>
                  <div className="mt-[18px] pl-[17px] grid grid-cols-[repeat(6,80.4px)] auto-rows-[80.2px]">
                    {GALLERY.map((icon, i) => (
                      <div key={i} className={`flex items-center justify-center ${i === 19 ? "m-[6px] border-2 border-[#222]" : ""}`}>
                        <svg viewBox="0 0 32 32" fill="none" strokeLinejoin="round" className={i === 19 ? "w-[46px] h-[46px]" : "w-[54px] h-[54px]"}>
                          {icon}
                        </svg>
                      </div>
                    ))}
                  </div>
                  <div className="mt-[14px] h-[2px] bg-[#e1dfdd]" />
                  <div className="mt-[24px] h-[998px] overflow-hidden text-[37px] text-[#323130]">
                    {FIELD_WELLS.map((name) => (
                      <div key={name} className="h-[172px]">
                        <div className="pl-[35px] h-[44px] leading-[44px]">{name}</div>
                        <div className="ml-[11px] mt-[18px] w-[487px] h-[78px] bg-white border-2 border-dashed border-[#d0cecc] flex items-center pl-[31px] whitespace-nowrap">
                          여기에 데이터 필드 추가
                        </div>
                      </div>
                    ))}
                  </div>
                  <div className="absolute left-[499px] top-[893px] w-[15px] h-[758px] rounded-full bg-[#d0cdcb]" />
                </div>

                {/* data pane */}
                <div className="flex-1 bg-[#f3f2f1] border-l-2 border-[#e1dfdd] text-[36px] text-[#484644]">
                  <div className="h-[108px] flex items-center pl-[25px] text-[#252423]">
                    <span className="text-[46px] font-semibold">데이터</span>
                    <ChevronsRight size={34} strokeWidth={1.6} className="ml-[305px]" />
                  </div>
                  <div className="ml-[11px] mt-[24px] w-[491px] h-[67px] rounded-[8px] bg-white border-2 border-[#c8c6c4] flex items-center">
                    <Search size={38} strokeWidth={1.5} className="ml-[34px]" />
                    <span className="ml-[26px] text-[#605e5c]">검색</span>
                  </div>
                  <div className="mt-[25px]">
                    {DATA_ROWS.map((row, i) => (
                      <DataRow key={i} row={row} />
                    ))}
                  </div>
                </div>
              </div>

              {/* status bar */}
              <div className="h-[68px] shrink-0 bg-[#f3f3f3] border-t-2 border-[#dedede] flex items-center text-[#444]">
                <span className="ml-[14px] text-[34px]">2/4 페이지</span>
                <div className="ml-auto flex items-center">
                  <Minus size={24} strokeWidth={3} />
                  <div className="relative ml-[9px] w-[286px] h-[2px] bg-[#555]">
                    <div className="absolute left-[95px] top-[-14px] w-[11px] h-[30px] bg-[#555]" />
                    <div className="absolute left-[143px] top-[-6px] w-[2px] h-[14px] bg-[#555]" />
                  </div>
                  <Plus size={30} strokeWidth={3} className="ml-[12px]" />
                  <span className="ml-[35px] text-[34px]">70%</span>
                  <Ic className="w-[44px] h-[36px] ml-[53px]" vb="0 0 32 26" stroke="#333" sw={1.6}><rect x="2" y="2" width="28" height="22" rx="3" /><path d="M7 10V7h4M21 7h4v3M25 16v3h-4M11 19H7v-3" /></Ic>
                  <div className="w-[52px]" />
                </div>
              </div>
            </div>
          </div>
        </div>

        {/* tutorial marks painted over the screenshot */}
        <div className="absolute left-[2564px] top-[1776px] w-[202px] h-[145px] border-[9px] border-[#ff0000]" />
        <div className="absolute left-[3249px] top-[470px] w-[106px] h-[99px] border-[9px] border-[#ff0000]" />
        <div className="absolute left-[2725px] top-[1600px] w-[168px] h-[168px] rounded-full border-[15px] border-[#c00000] bg-white flex items-center justify-center text-[#c00000] text-[112px] font-bold font-['Liberation_Sans',sans-serif]">1</div>
        <div className="absolute left-[3218px] top-[604px] w-[167px] h-[166px] rounded-full border-[15px] border-[#c00000] bg-white flex items-center justify-center text-[#c00000] text-[112px] font-bold font-['Liberation_Sans',sans-serif]">2</div>
      </div>
    </div>
  );
}
